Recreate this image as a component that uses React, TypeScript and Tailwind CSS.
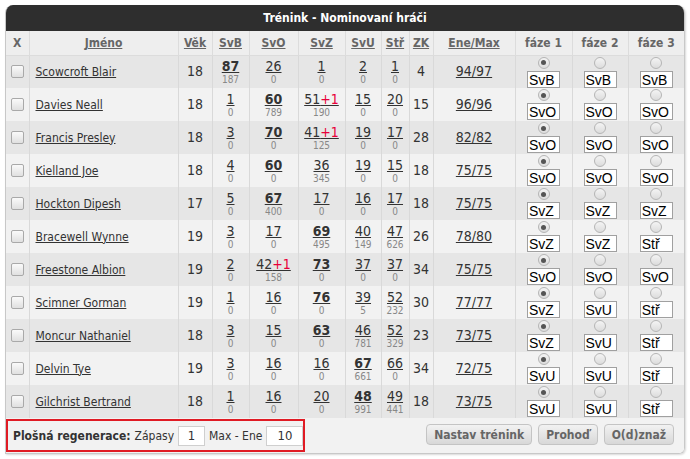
import React from 'react';

interface Stat {
  v: string;
  sub: string;
  bold?: boolean;
  plus?: string;
}

interface Player {
  name: string;
  age: number;
  stats: Stat[];
  zk: number;
  ene: string;
  phases: string[];
}

const s = (v: string, sub: string, bold = false, plus?: string): Stat => ({ v, sub, bold, plus });

const players: Player[] = [
  { name: 'Scowcroft Blair', age: 18, stats: [s('87', '187', true), s('26', '0'), s('1', '0'), s('2', '0'), s('1', '0')], zk: 4, ene: '94/97', phases: ['SvB', 'SvB', 'SvB'] },
  { name: 'Davies Neall', age: 18, stats: [s('1', '0'), s('60', '789', true), s('51', '190', false, '+1'), s('15', '0'), s('20', '0')], zk: 15, ene: '96/96', phases: ['SvO', 'SvO', 'SvO'] },
  { name: 'Francis Presley', age: 18, stats: [s('3', '0'), s('70', '0', true), s('41', '125', false, '+1'), s('19', '0'), s('17', '0')], zk: 28, ene: '82/82', phases: ['SvO', 'SvO', 'SvO'] },
  { name: 'Kielland Joe', age: 18, stats: [s('4', '0'), s('60', '0', true), s('36', '345'), s('19', '0'), s('15', '0')], zk: 18, ene: '75/75', phases: ['SvO', 'SvO', 'SvO'] },
  { name: 'Hockton Dipesh', age: 17, stats: [s('5', '0'), s('67', '400', true), s('17', '0'), s('16', '0'), s('17', '0')], zk: 18, ene: '75/75', phases: ['SvZ', 'SvZ', 'SvZ'] },
  { name: 'Bracewell Wynne', age: 19, stats: [s('3', '0'), s('17', '0'), s('69', '495', true), s('40', '149'), s('47', '626')], zk: 26, ene: '78/80', phases: ['SvZ', 'SvZ', 'Stř'] },
  { name: 'Freestone Albion', age: 19, stats: [s('2', '0'), s('42', '158', false, '+1'), s('73', '0', true), s('37', '0'), s('37', '0')], zk: 34, ene: '75/75', phases: ['SvO', 'SvO', 'SvO'] },
  { name: 'Scimner Gorman', age: 19, stats: [s('1', '0'), s('16', '0'), s('76', '0', true), s('39', '5'), s('52', '232')], zk: 30, ene: '77/77', phases: ['SvZ', 'SvU', 'Stř'] },
  { name: 'Moncur Nathaniel', age: 18, stats: [s('3', '0'), s('15', '0'), s('63', '0', true), s('46', '781'), s('52', '329')], zk: 23, ene: '73/75', phases: ['SvZ', 'SvU', 'Stř'] },
  { name: 'Delvin Tye', age: 19, stats: [s('3', '0'), s('16', '0'), s('16', '0'), s('67', '661', true), s('66', '0')], zk: 34, ene: '72/75', phases: ['SvU', 'SvU', 'Stř'] },
  { name: 'Gilchrist Bertrand', age: 18, stats: [s('1', '0'), s('16', '0'), s('20', '0'), s('48', '991', true), s('49', '441')], zk: 18, ene: '73/75', phases: ['SvU', 'SvU', 'Stř'] },
];

const font = { fontFamily: '"DejaVu Sans Condensed", "DejaVu Sans", sans-serif' };

function Radio({ checked }: { checked?: boolean }) {
  return (
    <span className="flex h-[12px] w-[12px] items-center justify-center rounded-full border border-[#b5b5b5] bg-gradient-to-b from-[#f4f4f4] to-[#dcdcdc]">
      {checked && <span className="h-[5px] w-[5px] rounded-full bg-[#555]" />}
    </span>
  );
}

function Checkbox() {
  return <span className="block h-[13px] w-[13px] rounded-[2px] border border-[#a9a9a9] bg-gradient-to-b from-[#fafafa] to-[#e0e0e0]" />;
}

function PhaseCell({ value, checked }: { value: string; checked?: boolean }) {
  return (
    <td className="border-l border-[#d9d9d9] p-0 align-top">
      <div className="flex h-[32px] flex-col items-center overflow-hidden pt-[1px]">
        <Radio checked={checked} />
        <div
          className="mt-[2px] h-[17px] w-[33px] overflow-hidden border border-[#a0a0a0] bg-white pl-[1px] text-[14px] leading-[16px] text-black"
          style={{ fontFamily: '"Liberation Sans", Arial, sans-serif' }}
        >
          {value}
        </div>
      </div>
    </td>
  );
}

function StatCell({ stat }: { stat: Stat }) {
  return (
    <td className="border-l border-[#d9d9d9] p-0 text-center align-middle">
      <div className={`text-[14px] leading-[16px] text-[#333] underline ${stat.bold ? 'font-bold' : ''}`}>
        {stat.v}
        {stat.plus && <span className="text-[#e8003a]">{stat.plus}</span>}
      </div>
      <div className="text-[10px] leading-[12px] text-[#888]">{stat.sub}</div>
    </td>
  );
}

function HeadCell({ label, link = true, first = false }: { label: string; link?: boolean; first?: boolean }) {
  return (
    <th className={`p-0 text-center text-[12px] font-bold text-[#666] ${first ? '' : 'border-l border-[#dcdcdc]'}`}>
      <span className={link ? 'underline' : ''}>{label}</span>
    </th>
  );
}

export default function App(): React.ReactElement {
  return (
    <div className="min-h-[459px] bg-white px-[5px] pt-[5px]" style={font}>
      <div className="w-[680px] overflow-hidden rounded-t-[8px] rounded-br-[6px] border-b border-r border-l border-[#c8c8c8] shadow-[1px_1px_2px_rgba(0,0,0,0.15)]">
        <div className="flex h-[26px] items-center justify-center bg-[#2e2e2e] text-[12px] font-bold text-white">
          Trénink - Nominovaní hráči
        </div>
        <table className="w-full table-fixed border-collapse text-[#333]">
          <colgroup>
            <col className="w-[23px]" />
            <col className="w-[149px]" />
            <col className="w-[34px]" />
            <col className="w-[37px]" />
            <col className="w-[49px]" />
            <col className="w-[47px]" />
            <col className="w-[36px]" />
            <col className="w-[28px]" />
            <col className="w-[24px]" />
            <col className="w-[82px]" />
            <col className="w-[57px]" />
            <col className="w-[56px]" />
            <col />
          </colgroup>
          <thead>
            <tr className="h-[24px] border-b border-[#dcdcdc] bg-[#eeeeee]">
              <HeadCell label="X" link={false} first />
              <HeadCell label="Jméno" />
              <HeadCell label="Věk" />
              <HeadCell label="SvB" />
              <HeadCell label="SvO" />
              <HeadCell label="SvZ" />
              <HeadCell label="SvU" />
              <HeadCell label="Stř" />
              <HeadCell label="ZK" />
              <HeadCell label="Ene/Max" />
              <HeadCell label="fáze 1" link={false} />
              <HeadCell label="fáze 2" link={false} />
              <HeadCell label="fáze 3" link={false} />
            </tr>
          </thead>
          <tbody>
            {players.map((p, i) => (
              <tr key={p.name} className={`h-[33px] ${i % 2 === 0 ? 'bg-[#e6e6e6]' : 'bg-[#f2f2f2]'}`}>
                <td className="p-0 pl-[5px] align-middle">
                  <Checkbox />
                </td>
                <td className="border-l border-[#d9d9d9] p-0 pl-[6px] align-middle text-[12px]">
                  <span className="underline">{p.name}</span>
                </td>
                <td className="border-l border-[#d9d9d9] p-0 text-center align-middle text-[14px]">{p.age}</td>
                {p.stats.map((st, j) => (
                  <StatCell key={j} stat={st} />
                ))}
                <td className="border-l border-[#d9d9d9] p-0 text-center align-middle text-[14px]">{p.zk}</td>
                <td className="border-l border-[#d9d9d9] p-0 text-center align-middle text-[14px]">
                  <span className="underline">{p.ene}</span>
                </td>
                <PhaseCell value={p.phases[0]} checked />
                <PhaseCell value={p.phases[1]} />
                <PhaseCell value={p.phases[2]} />
              </tr>
            ))}
          </tbody>
        </table>
        <div className="flex h-[35px] items-center justify-between bg-[#f2f2f2] pr-[10px]">
          <div className="flex h-[33px] w-[299px] shrink-0 items-center gap-[4px] whitespace-nowrap border-2 border-[#e01b24] pl-[5px] text-[12px] text-[#333]">
            <span className="font-bold">Plošná regenerace:</span>
            <span>Zápasy</span>
            <span className="flex h-[20px] w-[27px] shrink-0 items-center justify-center border border-[#cfcfcf] bg-white text-[13px]">1</span>
            <span>Max - Ene</span>
            <span className="flex h-[20px] w-[37px] shrink-0 items-center justify-center border border-[#cfcfcf] bg-white text-[13px]">10</span>
          </div>
          <div className="flex items-center gap-[6px] pb-[2px]">
            {['Nastav trénink', 'Prohoď', 'O(d)znaž'].map((b) => (
              <button
                key={b}
                className="h-[21px] whitespace-nowrap rounded-[4px] border border-[#c4c4c4] bg-gradient-to-b from-[#f2f2f2] to-[#d8d8d8] px-[7px] text-[12px] font-bold text-[#666]"
              >
                {b}
              </button>
            ))}
          </div>
        </div>
      </div>
    </div>
  );
}
